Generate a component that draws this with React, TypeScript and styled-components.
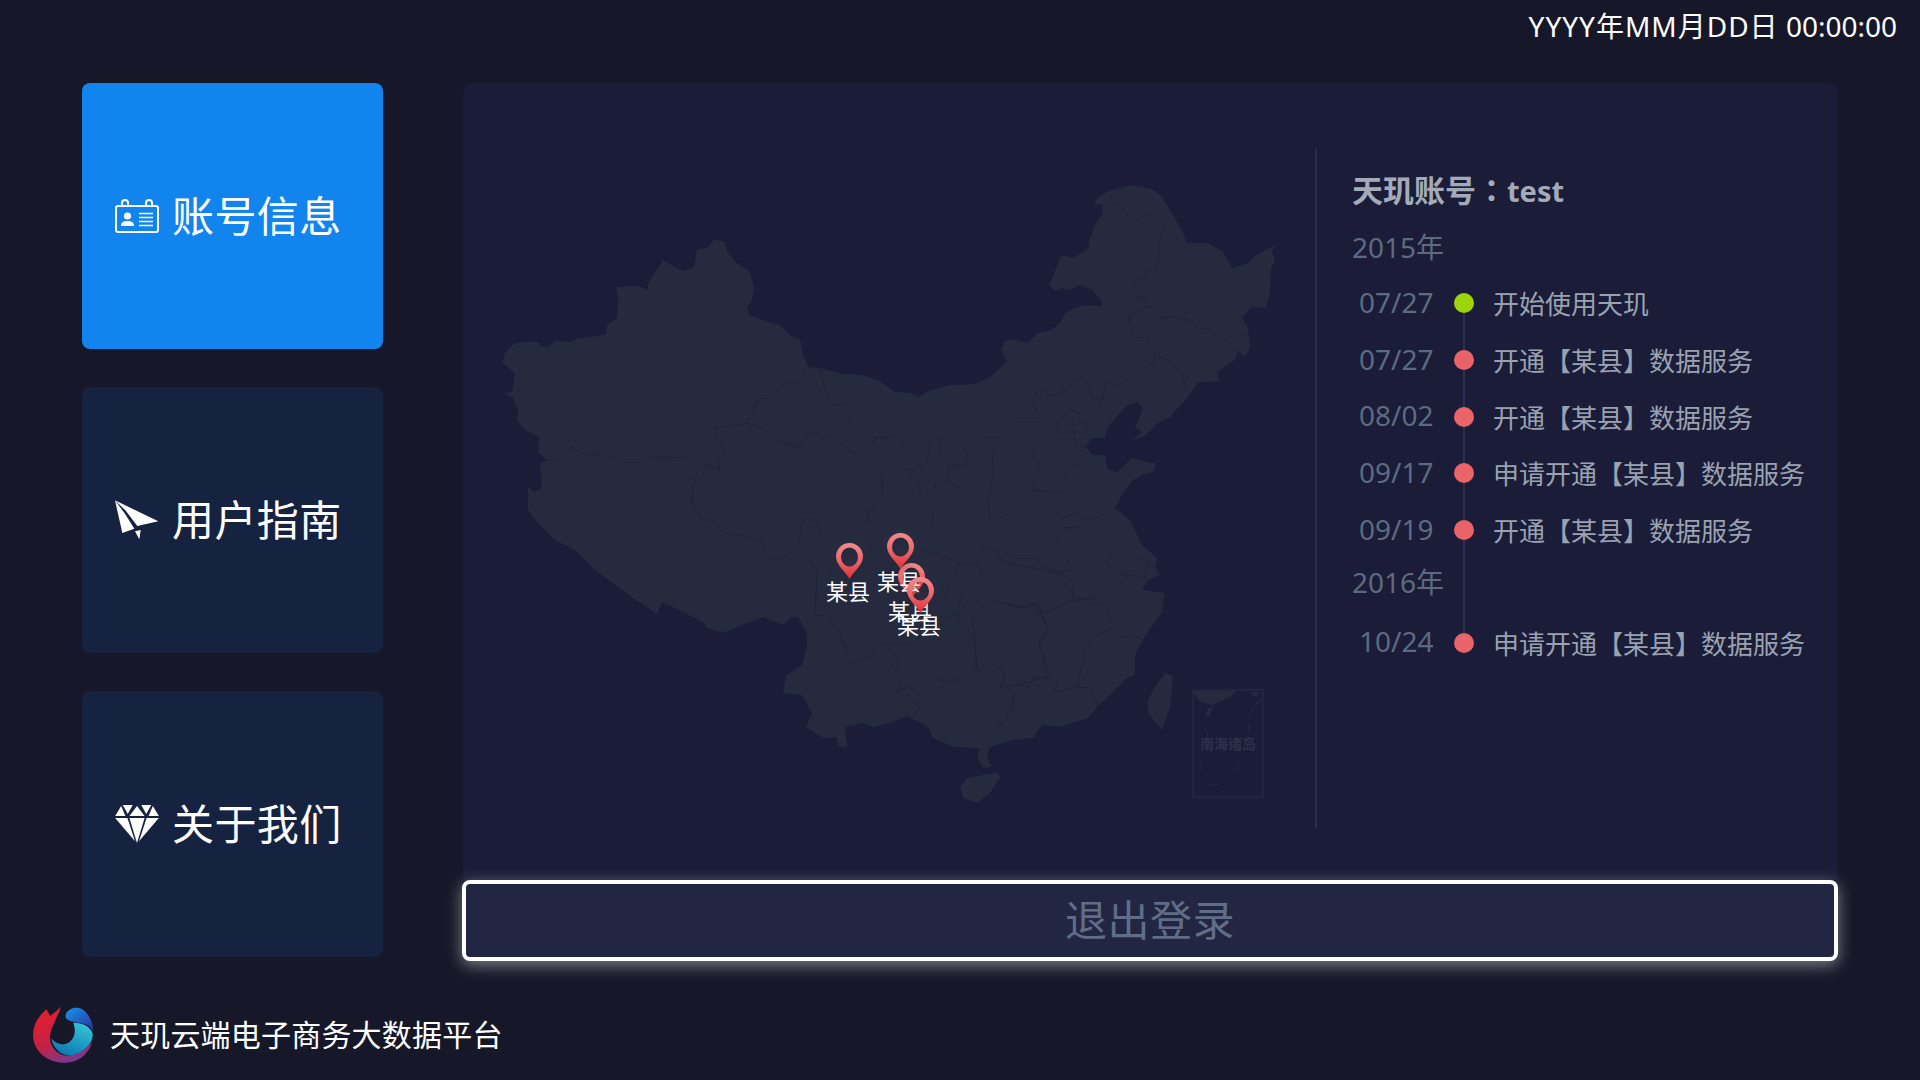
import React from 'react';
import styled, { createGlobalStyle } from 'styled-components';

const FONT = `'Noto Sans', 'Noto Sans CJK SC', sans-serif`;

const CHINA = `M502 362L505 353L515 343L528 342L538 342L540 346L548 347L556 340L569 342L577 339L595 336L606 334L607 325L617 318L618 298L616 287L638 286L648 290L648 283L663 260L673 266L683 271L694 267L697 250L708 247L715 239L725 242L727 252L737 263L750 272L754 288L752 300L747 308L750 315L765 321L780 325L790 335L800 340L803 355L809 367L820 368L842 374L862 375L878 380L895 392L912 393L918 397L928 391L950 385L975 384L990 377L1007 362L1001 350L1005 341L1012 339L1028 343L1038 333L1052 330L1060 322L1065 313L1075 308L1085 305L1102 306L1102 301L1092 290L1080 285L1070 290L1062 288L1055 291L1049 285L1055 272L1061 255L1073 258L1090 247L1088 243L1095 225L1103 213L1102 205L1094 204L1098 197L1112 190L1132 185L1152 189L1162 197L1173 215L1183 233L1187 243L1208 243L1223 252L1232 268L1248 263L1252 258L1265 250L1276 245L1272 252L1275 262L1271 268L1270 292L1266 308L1252 307L1242 317L1248 328L1250 347L1245 357L1238 351L1235 360L1217 372L1219 381L1203 382L1198 382L1188 397L1170 417L1158 423L1143 437L1133 440L1142 432L1135 427L1143 410L1138 402L1127 405L1108 427L1105 438L1092 438L1085 447L1093 455L1105 455L1108 470L1117 472L1132 458L1152 463L1156 463L1153 472L1142 475L1133 480L1125 490L1115 508L1130 520L1142 545L1157 558L1155 567L1160 575L1148 580L1142 590L1165 593L1162 612L1147 633L1135 655L1135 675L1127 678L1112 693L1097 707L1088 718L1060 727L1042 725L1033 738L1013 740L990 747L987 757L992 767L983 768L977 757L980 748L953 747L933 738L928 727L907 716L890 723L873 727L863 723L845 727L847 747L838 746L837 737L823 738L806 727L812 713L802 695L783 693L786 675L802 665L807 647L807 633L798 617L791 617L783 625L763 617L742 625L723 633L707 628L703 622L662 602L657 614L633 598L595 570L575 550L555 540L538 523L528 510L528 487L534 492L542 488L540 463L547 460L538 453L539 437L525 430L517 420L518 410L513 398L503 393L512 392L515 373L505 365Z
M960 787L967 778L983 775L998 772L1000 778L990 793L977 803L963 798Z
M1165 673L1173 676L1170 707L1162 730L1148 713L1148 700L1155 687Z`;

const BORDERS = [
	'547 460 560 460 572 447 588 456 602 452 622 462 643 462 653 457 685 458 699 467',
	'699 467 705 465 720 470 717 460 725 452 715 437 715 428 747 423',
	'747 423 753 413 758 398 768 398 782 385 803 380 805 368 820 368',
	'820 368 825 390 832 405 853 404 855 410 847 422 862 437 873 445 875 438 895 437',
	'747 423 765 430 773 440 800 447 808 432 823 438 832 436 850 450 872 467 882 478 883 493 868 513 868 523',
	'699 467 694 483 692 502 702 520 713 520 723 532 760 540 770 557 780 560 798 548 800 535 802 520 817 520 820 532 828 543',
	'798 548 817 570 815 615 805 623',
	'815 615 825 615 840 633 850 663 873 657 875 643 885 645',
	'885 645 900 660 895 673 900 682 897 692 920 707 912 717',
	'897 692 907 687 920 692 937 678 948 683 977 670 993 665 1005 672 1002 685 1015 693 1012 713 995 730 983 745',
	'977 670 975 647 972 613 993 600 1017 607 1037 603 1048 628 1040 643 1047 677 1028 682 1017 685',
	'1037 603 1043 613 1075 600 1100 598',
	'885 645 913 643 940 617 957 615 970 632',
	'957 615 962 593 985 580 977 565 960 563 940 607',
	'920 550 940 555 960 563',
	'930 533 933 513',
	'978 547 997 550 1003 562 1057 573 1075 597',
	'990 520 988 500 990 495 993 472 992 458 1000 437 983 438 968 453 965 467 950 465 947 475 937 477 935 488',
	'895 435 905 442 895 452',
	'908 470 927 463 930 442 938 438 942 458 950 465',
	'945 477 965 492',
	'895 465 908 470 920 485 920 495',
	'1033 402 1038 390 1047 388 1048 397 1070 388 1073 380 1083 378 1090 388 1092 398 1103 399 1100 408 1113 420',
	'1033 402 1038 415',
	'1092 398 1103 399 1105 380 1112 382 1115 388 1142 368 1153 363 1155 355',
	'1155 355 1170 362 1182 375 1188 395',
	'1128 317 1143 307 1153 307 1158 318 1175 317 1193 322 1198 330 1210 328 1222 342 1237 332 1250 340',
	'1128 317 1135 338 1147 338 1155 355',
	'1113 193 1108 203 1118 203 1132 222 1153 213 1165 223 1158 245 1160 255 1153 273 1150 268 1132 290 1138 298 1145 297 1147 303 1140 317 1128 317',
	'1057 423 1070 408 1078 413 1080 422 1085 422 1088 432 1077 432 1072 432 1058 432 1057 423',
	'1073 423 1075 445 1085 447',
	'1000 518 1013 510 1033 490 1055 492 1068 493 1052 510 1062 518 1078 513 1092 520 1110 510',
	'1055 487 1070 467 1088 457',
	'1000 548 1012 558 1037 558 1042 567 1062 573 1073 583 1073 600',
	'1077 513 1100 537 1107 548 1117 547 1118 552 1107 562 1115 573 1133 575 1145 578 1148 563 1137 558 1157 567',
	'1078 527 1063 528 1055 545 1067 557 1070 568 1062 573',
	'1073 600 1082 598 1088 603 1107 605 1127 575',
	'1107 612 1115 627 1122 638 1133 635 1143 640',
	'1115 627 1093 637 1085 652 1077 687',
	'1040 613 1048 628 1038 643 1048 667 1045 678',
	'1000 602 1025 608 1033 603 1040 615 1073 600',
	'1000 687 1017 685 1030 687 1033 678 1045 678 1058 682 1053 693 1077 687 1090 688 1098 705',
	'1015 692 1007 717 1000 727',
	'1000 665 1005 675 1000 687'
];

const FAINT_BORDERS = ['1042 422 1032 452 1040 468 1033 485', '1042 422 1015 422 1000 437'];

const toPath = (line: string) => {
	const n = line.split(' ');
	let d = '';
	for (let i = 0; i < n.length; i += 2) d += `${i ? 'L' : 'M'}${n[i]} ${n[i + 1]}`;
	return d;
};

const PINS = [
	{ x: 356, y: 383 },
	{ x: 418, y: 403 },
	{ x: 407, y: 373 },
	{ x: 427, y: 417 }
];

const HISTORY = [
	{ date: '07/27', text: '开始使用天玑', first: true },
	{ date: '07/27', text: '开通【某县】数据服务' },
	{ date: '08/02', text: '开通【某县】数据服务' },
	{ date: '09/17', text: '申请开通【某县】数据服务' },
	{ date: '09/19', text: '开通【某县】数据服务' }
];

const IdCardIcon = () => (
	<svg width='44' height='34' viewBox='0 0 44 34' fill='none' stroke='#fff'>
		<rect x='1' y='7' width='42' height='26' rx='2' strokeWidth='2' />
		<path d='M7 7V4a3 3 0 0 1 6 0v3M31 7V4a3 3 0 0 1 6 0v3' strokeWidth='2' />
		<circle cx='12.5' cy='17' r='3.6' fill='#fff' stroke='none' />
		<path d='M6 27c0-4 3-5 6.5-5s6.5 1 6.5 5z' fill='#fff' stroke='none' />
		<path d='M24 14.5h14M24 18.5h14M24 22.5h14M24 26.500h14' strokeWidth='1.6' />
	</svg>
);

const PlaneIcon = () => (
	<svg width='44' height='40' viewBox='75 95 132 118' fill='#fff'>
		<path d='M75 95L205 158L142 172L106 125Z' />
		<path d='M75 95L97 193L133 180L104 134Z' />
		<path d='M135 188L152 184L148 212Z' />
	</svg>
);

const DiamondIcon = () => (
	<svg width='44' height='38' viewBox='75 1005 132 115' fill='#fff'>
		<path d='M75 1038L93 1008L106 1038Z' />
		<path d='M98 1005H128L113 1032Z' />
		<path d='M118 1038L141 1008L164 1038Z' />
		<path d='M154 1005H184L169 1032Z' />
		<path d='M176 1038L189 1008L207 1038Z' />
		<path d='M75 1044H112L135 1115Z' />
		<path d='M118 1044H164L141 1120Z' />
		<path d='M170 1044H207L147 1115Z' />
	</svg>
);

const Logo = () => (
	<svg width='64' height='60' viewBox='90 75 185 180' preserveAspectRatio='none'>
		<defs>
			<linearGradient id='logoRed' x1='0.2' y1='0.1' x2='0.5' y2='1'>
				<stop offset='0' stopColor='#e01f30' />
				<stop offset='0.6' stopColor='#c62045' />
				<stop offset='1' stopColor='#7a3a8a' />
			</linearGradient>
			<linearGradient id='logoBlue' x1='0.1' y1='0' x2='1' y2='0.8'>
				<stop offset='0' stopColor='#1690ea' />
				<stop offset='1' stopColor='#2b3a9f' />
			</linearGradient>
			<linearGradient id='logoCyan' x1='0.8' y1='0' x2='0.3' y2='1'>
				<stop offset='0' stopColor='#35c6d6' />
				<stop offset='1' stopColor='#0c78b4' />
			</linearGradient>
		</defs>
		<path
			d='M135 88C110 110 96 135 96 165C96 215 140 250 190 248C225 247 255 225 268 185C250 205 235 222 200 226C170 230 150 205 145 180C143 155 155 135 165 110C170 98 175 88 176 80C165 92 155 100 145 108C142 100 138 95 135 88Z'
			fill='url(#logoRed)'
		/>
		<path d='M190 105C195 88 215 80 232 85C255 95 270 125 270 155C262 135 245 130 225 128C205 125 188 120 190 105Z' fill='url(#logoBlue)' />
		<path d='M212 128C240 128 262 140 268 160C272 190 240 222 205 226C175 228 155 205 148 175C160 190 180 198 195 190C215 180 222 155 212 128Z' fill='url(#logoCyan)' />
	</svg>
);

const PinGlyph = () => (
	<svg width='27' height='36' viewBox='0 0 27 36'>
		<defs>
			<linearGradient id='pinFill' x1='0' y1='0' x2='0' y2='1'>
				<stop offset='0' stopColor='#f58a8c' />
				<stop offset='0.55' stopColor='#ea6166' />
				<stop offset='1' stopColor='#dd2f33' />
			</linearGradient>
		</defs>
		<path
			fillRule='evenodd'
			fill='url(#pinFill)'
			d='M13.500 0a13.500 13.500 0 0 1 13.500 13.500c0 9-9 14-13.500 22.500C9 27.500 0 22.500 0 13.500A13.500 13.500 0 0 1 13.500 0zM13.500 4.500a8.500 9.500 0 1 0 0 19a8.500 9.500 0 1 0 0-19z'
		/>
	</svg>
);

const ChinaMap = () => (
	<MapSvg viewBox='480 160 830 660' fill='none'>
		<path d={CHINA} fill='#262a3f' />
		<path d={BORDERS.map(toPath).join('')} stroke='#1f2238' strokeWidth='1' strokeLinejoin='round' />
		<path d={FAINT_BORDERS.map(toPath).join('')} stroke='#23273b' strokeWidth='1' />
		<rect x='1193' y='690' width='70' height='107' stroke='#25283f' strokeWidth='1.500' />
		<path d='M1193 691L1200 702L1213 705L1230 697L1237 691ZM1250 692L1256 698L1260 692ZM1205 717L1208 708L1213 707L1210 715Z' fill='#262a3f' />
		<path
			d='M1255 705L1262 698M1249 717L1253 708M1248 732L1250 723M1205 728L1208 736M1200 762L1203 770M1232 771Q1238 770 1239 762M1209 783Q1213 787 1218 784'
			stroke='#262a3f'
			strokeWidth='1.200'
		/>
		<InsetLabel x='1228' y='749' textAnchor='middle'>
			南海诸岛
		</InsetLabel>
	</MapSvg>
);

const App = () => {
	return (
		<Page>
			<GlobalStyle />
			<Header>
				<DatePart>YYYY年MM月DD日</DatePart> 00:00:00
			</Header>
			<Body>
				<Sidebar>
					<NavCard $active>
						<IdCardIcon />
						<span>账号信息</span>
					</NavCard>
					<NavCard>
						<PlaneIcon />
						<span>用户指南</span>
					</NavCard>
					<NavCard>
						<DiamondIcon />
						<span>关于我们</span>
					</NavCard>
				</Sidebar>
				<Main>
					<Panel>
						<MapArea>
							<ChinaMap />
							{PINS.map((pin, i) => (
								<Pin key={i} $x={pin.x} $y={pin.y}>
									<PinGlyph />
									<PinLabel>某县</PinLabel>
								</Pin>
							))}
						</MapArea>
						<Info>
							<Account>
								天玑账号<Colon>：</Colon>
								<AccountName>test</AccountName>
							</Account>
							<Year>2015年</Year>
							<Timeline>
								{HISTORY.map((item, i) => (
									<Row key={i}>
										<DateText>{item.date}</DateText>
										<Dot $first={item.first} />
										<RowText>{item.text}</RowText>
									</Row>
								))}
								<TimelineYear>2016年</TimelineYear>
								<Row>
									<DateText>10/24</DateText>
									<Dot />
									<RowText>申请开通【某县】数据服务</RowText>
								</Row>
							</Timeline>
						</Info>
					</Panel>
					<LogoutButton>退出登录</LogoutButton>
				</Main>
			</Body>
			<Footer>
				<Logo />
				<span>天玑云端电子商务大数据平台</span>
			</Footer>
		</Page>
	);
};

const GlobalStyle = createGlobalStyle`
	html, body {
		margin: 0;
		padding: 0;
		background: #161829;
	}
	* {
		box-sizing: border-box;
	}
`;

const Page = styled.div`
	width: 1920px;
	height: 1080px;
	overflow: hidden;
	background: #161829;
	font-family: ${FONT};
	color: #fff;
	display: flex;
	flex-direction: column;
`;

const Header = styled.header`
	height: 83px;
	padding: 7px 23px 0 0;
	text-align: right;
	font-size: 28px;
	line-height: 38px;
`;

const DatePart = styled.span`
	letter-spacing: 1px;
`;

const Body = styled.div`
	display: flex;
	gap: 80px;
	padding-left: 82px;
	height: 878px;
`;

const Sidebar = styled.nav`
	width: 301px;
	display: flex;
	flex-direction: column;
	gap: 38px;
`;

const NavCard = styled.div<{ $active?: boolean }>`
	height: 266px;
	padding-left: 33px;
	border-radius: 8px;
	background: ${p => (p.$active ? '#1184ee' : '#162340')};
	display: flex;
	align-items: center;
	gap: 13px;
	font-size: 42px;
	line-height: 50px;
	letter-spacing: 0.4px;
`;

const Main = styled.main`
	width: 1375px;
	display: flex;
	flex-direction: column;
`;

const Panel = styled.section`
	height: 797px;
	padding: 66px 0 0 17px;
	background: #1a1c38;
	border-radius: 10px 10px 0 0;
	display: flex;
	align-items: flex-start;
`;

const MapArea = styled.div`
	position: relative;
	width: 830px;
	height: 660px;
	margin: 11px 5px 0 0;
	flex: none;
`;

const MapSvg = styled.svg`
	display: block;
	width: 830px;
	height: 660px;
`;

const InsetLabel = styled.text`
	font-family: ${FONT};
	font-size: 14px;
	font-weight: 700;
	fill: #2e3148;
`;

const Pin = styled.div<{ $x: number; $y: number }>`
	position: absolute;
	left: ${p => p.$x}px;
	top: ${p => p.$y}px;
	width: 27px;

	svg {
		display: block;
		filter: drop-shadow(0 3px 4px rgba(0, 0, 0, 0.3)) drop-shadow(0 0 6px rgba(255, 255, 255, 0.08));
	}
`;

const PinLabel = styled.div`
	position: absolute;
	left: -12px;
	top: 36px;
	width: 48px;
	text-align: center;
	font-size: 22px;
	line-height: 24px;
	color: #fff;
`;

const Info = styled.div`
	height: 679px;
	padding: 21px 0 0 35px;
	border-left: 2px solid #2a2d48;
	flex: 1;
`;

const Account = styled.h2`
	height: 40px;
	margin: 0 0 17px;
	font-size: 31px;
	font-weight: 700;
	line-height: 40px;
	color: #a3abb9;
`;

const Colon = styled.span`
	font-family: 'Noto Sans CJK TC', sans-serif;
	line-height: 1;
`;

const AccountName = styled.span`
	font-size: 29px;
`;

const Year = styled.div`
	font-size: 28px;
	line-height: 40px;
	color: #5d6b80;
`;

const TimelineYear = styled(Year)`
	margin: 5px 0 11px;
`;

const Timeline = styled.div`
	position: relative;
	margin-top: 7px;

	&::before {
		content: '';
		position: absolute;
		left: 111px;
		top: 28px;
		bottom: 28px;
		width: 2px;
		background: #2c3050;
	}
`;

const Row = styled.div`
	position: relative;
	height: 56.7px;
	padding-left: 7px;
	display: grid;
	grid-template-columns: 76px 20px 1fr;
	column-gap: 19px;
	align-items: center;
`;

const DateText = styled.span`
	font-size: 28px;
	line-height: 40px;
	color: #5d6b80;
	margin-top: -1px;
`;

const Dot = styled.i<{ $first?: boolean }>`
	width: 20px;
	height: 20px;
	margin-top: 2px;
	border-radius: 50%;
	background: ${p => (p.$first ? '#9cd50b' : '#e86468')};
`;

const RowText = styled.span`
	font-size: 26px;
	line-height: 36px;
	margin-top: 4px;
	color: #9aa2b0;
	white-space: nowrap;
`;

const LogoutButton = styled.button`
	height: 81px;
	width: calc(100% + 1px);
	margin-left: -1px;
	border: 4px solid #fff;
	border-radius: 8px;
	background: #222642;
	box-shadow: 0 4px 16px rgba(255, 255, 255, 0.45);
	font-family: ${FONT};
	font-size: 42px;
	letter-spacing: 0.5px;
	color: #5f6e86;
	padding: 0 0 6px;
`;

const Footer = styled.footer`
	display: flex;
	align-items: center;
	gap: 15px;
	padding: 44px 0 0 31px;
	font-size: 30px;
	line-height: 60px;
	letter-spacing: 0.2px;
`;

export default App;
